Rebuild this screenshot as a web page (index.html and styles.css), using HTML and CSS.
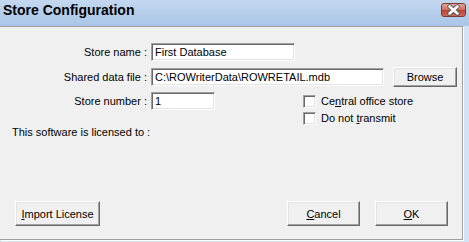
FILE: index.html
```html
<!DOCTYPE html>
<html lang="en">
<head>
  <meta charset="UTF-8">
  <title>Store Configuration</title>
  <link rel="stylesheet" href="styles.css">
</head>
<body>
  <div class="window">
    <div class="titlebar">
      <span class="title">Store Configuration</span>
      <span class="close-btn">
        <svg width="25" height="14" viewBox="0 0 25 14">
          <path d="M8.5 3.5 L16.5 10.5 M16.5 3.5 L8.5 10.5" stroke="#5a5a5a" stroke-width="4.4" stroke-linecap="round"/>
          <path d="M8.5 3.5 L16.5 10.5 M16.5 3.5 L8.5 10.5" stroke="#ffffff" stroke-width="2.6" stroke-linecap="round"/>
        </svg>
      </span>
    </div>
    <div class="frame">
      <div class="client">
        <div class="form">
          <div class="row row-name">
            <label class="label" for="storeName">Store name :</label>
            <input class="field field-name" id="storeName" type="text" value="First Database">
          </div>
          <div class="row row-file">
            <label class="label" for="dataFile">Shared data file :</label>
            <input class="field field-file" id="dataFile" type="text" value="C:\ROWriterData\ROWRETAIL.mdb">
            <button class="btn btn-browse">Browse</button>
          </div>
          <div class="row row-number">
            <label class="label" for="storeNumber">Store number :</label>
            <input class="field field-number" id="storeNumber" type="text" value="1">
            <div class="checks">
              <label class="check"><input type="checkbox" class="box"><span>Ce<u>n</u>tral office store</span></label>
              <label class="check"><input type="checkbox" class="box"><span>Do not <u>t</u>ransmit</span></label>
            </div>
          </div>
        </div>
        <p class="licensed">This software is licensed to :</p>
        <div class="actions">
          <button class="btn btn-import"><u>I</u>mport License</button>
          <button class="btn btn-cancel"><u>C</u>ancel</button>
          <button class="btn btn-ok"><u>O</u>K</button>
        </div>
      </div>
    </div>
  </div>
</body>
</html>
```

FILE: styles.css
```css
/* General */
* {
  margin: 0;
  padding: 0;
  box-sizing: border-box;
}

body {
  width: 469px;
  height: 242px;
  overflow: hidden;
  background: #c9dcf1;
  font-family: 'Liberation Sans', Arial, sans-serif;
  font-size: 11px;
  color: #000;
}

.window {
  display: flex;
  flex-direction: column;
  height: 242px;
}

/* Title bar */
.titlebar {
  display: flex;
  justify-content: space-between;
  align-items: flex-start;
  height: 26px;
  padding: 2px 3px 0 3px;
  background: linear-gradient(to bottom, #c3d7ef, #a9c5e7);
}

.title {
  font-size: 14px;
  font-weight: bold;
  line-height: 16px;
  color: #000;
}

.close-btn {
  display: block;
  width: 25px;
  height: 14px;
  margin-top: 1px;
  border: 1px solid #7b3a32;
  border-radius: 3px;
  background: linear-gradient(to bottom, #e2a89d, #cf6b5d 50%, #b9402f 51%, #cd6a55);
  overflow: hidden;
}

.close-btn svg {
  display: block;
  margin: -1px 0 0 -1px;
}

/* Dialog body */
.frame {
  flex: 1;
  display: flex;
  background: #d3e2f4;
}

.client {
  display: flex;
  flex-direction: column;
  width: 463px;
  height: 214px;
  padding: 16px 0 13px 0;
  background: #f0f0f0;
  border-top: 1px solid #a0a0a0;
  border-right: 1px solid #a0a0a0;
  border-bottom: 1px solid #a0a0a0;
  box-shadow: 1px 1px 0 #ffffff;
}

.form {
  display: flex;
  flex-direction: column;
}

.row {
  display: flex;
  align-items: flex-start;
}

.row-file {
  margin-top: 7px;
}

.row-number {
  margin-top: 5px;
}

.label {
  width: 147px;
  margin-right: 4px;
  text-align: right;
  line-height: 18px;
  white-space: nowrap;
}

/* Sunken text fields */
.field {
  height: 18px;
  padding: 0 3px;
  font-family: inherit;
  font-size: 11px;
  color: #000;
  background: #fff;
  border-top: 1px solid #a0a0a0;
  border-left: 1px solid #a0a0a0;
  border-right: 1px solid #fff;
  border-bottom: 1px solid #fff;
  box-shadow: inset 1px 1px 0 #696969, inset -1px -1px 0 #e3e3e3;
  outline: none;
}

.field-name {
  width: 144px;
}

.field-file {
  width: 233px;
}

.field-number {
  width: 64px;
}

/* Raised buttons */
.btn {
  height: 25px;
  font-family: inherit;
  font-size: 11px;
  color: #000;
  background: #f0f0f0;
  border-top: 1px solid #fff;
  border-left: 1px solid #fff;
  border-right: 1px solid #696969;
  border-bottom: 1px solid #696969;
  box-shadow: inset -1px -1px 0 #a0a0a0, inset 1px 1px 0 #e3e3e3;
  cursor: pointer;
}

.btn-browse {
  width: 64px;
  height: 20px;
  margin: -1px 0 0 9px;
}

/* Checkboxes */
.checks {
  display: flex;
  flex-direction: column;
  gap: 4px;
  margin-left: 88px;
  padding-top: 3px;
}

.check {
  display: flex;
  align-items: center;
  height: 13px;
  line-height: 13px;
  white-space: nowrap;
}

.box {
  appearance: none;
  width: 13px;
  height: 13px;
  margin-right: 5px;
  background: #fff;
  border-top: 1px solid #a0a0a0;
  border-left: 1px solid #a0a0a0;
  border-right: 1px solid #fff;
  border-bottom: 1px solid #fff;
  box-shadow: inset 1px 1px 0 #696969, inset -1px -1px 0 #e3e3e3;
}

.licensed {
  margin: 1px 0 0 12px;
  line-height: 13px;
}

/* Bottom buttons */
.actions {
  display: flex;
  margin-top: auto;
  padding: 0 14px 0 15px;
}

.btn-import {
  width: 85px;
}

.btn-cancel {
  width: 73px;
  margin-left: auto;
}

.btn-ok {
  width: 73px;
  margin-left: 15px;
}
```
